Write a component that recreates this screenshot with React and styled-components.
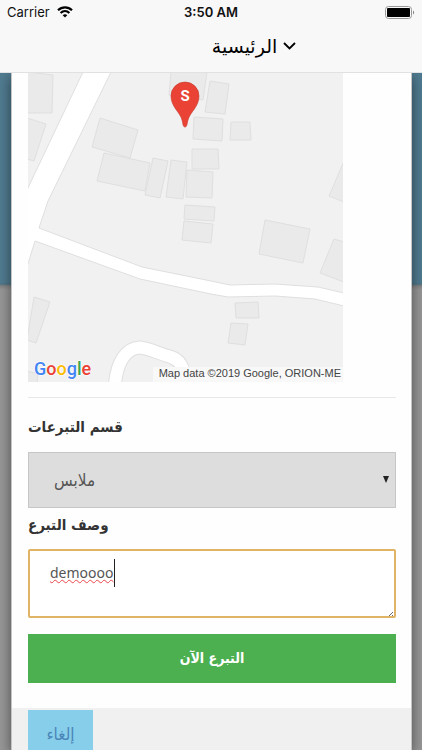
import React from 'react';
import styled, { createGlobalStyle } from 'styled-components';

const GlobalStyle = createGlobalStyle`
  * {
    box-sizing: border-box;
  }

  body {
    margin: 0;
    font-family: "DejaVu Sans Condensed", "DejaVu Sans", sans-serif;
    color: #333;
  }

  button,
  select {
    font-family: inherit;
  }
`;

const Screen = styled.div`
  display: flex;
  flex-direction: column;
  height: 100vh;
  overflow: hidden;
`;

const TopBar = styled.header`
  position: relative;
  z-index: 1;
  flex: none;
  background-color: #f8f8f8;
  border-bottom: 1px solid #dfe1e3;
`;

const StatusBar = styled.div`
  display: grid;
  grid-template-columns: 1fr auto 1fr;
  align-items: center;
  height: 24px;
  padding: 0 7px;
  font-family: Inter, sans-serif;
  font-size: 13px;
  color: #111;
`;

const Carrier = styled.div`
  display: flex;
  align-items: center;
  gap: 7px;
`;

const Time = styled.div`
  font-weight: 600;
`;

const Battery = styled.svg`
  justify-self: end;
`;

const MenuRow = styled.div`
  display: flex;
  padding-left: 86px;
`;

const MenuButton = styled.button`
  display: flex;
  align-items: center;
  gap: 6px;
  height: 48px;
  margin: 0 auto;
  padding: 0 0 4px;
  border: 0;
  background: none;
  font-family: "DejaVu Sans", sans-serif;
  font-size: 19px;
  color: #000;
`;

const Backdrop = styled.main`
  flex: 1;
  display: flex;
  min-height: 0;
  background: linear-gradient(#507b90 210px, #4c7486 211px, #858585 213px, #979797 217px);
`;

const Sheet = styled.section`
  flex: 1;
  display: flex;
  flex-direction: column;
  min-width: 0;
  margin: 0 10px 0 11px;
  border: 1px solid #c4c4c4;
  border-width: 0 1px;
  background-color: #fefefe;
  box-shadow: 0 4px 12px rgba(0, 0, 0, 0.5);
`;

const Form = styled.form`
  display: flex;
  flex-direction: column;
  padding: 0 15px 25px 16px;
`;

const Map = styled.svg`
  display: block;
  width: 315px;
  max-width: 100%;
`;

const Divider = styled.hr`
  width: 100%;
  margin: 15px 0 17px;
  border: 0;
  border-top: 1px solid #e8e8e8;
`;

const Label = styled.label`
  height: 24px;
  font-size: 15px;
  font-weight: bold;
  line-height: 24px;
`;

const SelectBox = styled.div`
  position: relative;
  margin: 13px 0 5px;
`;

const Select = styled.select`
  display: block;
  appearance: none;
  width: 100%;
  height: 56px;
  padding: 0 25px;
  border: 1px solid #c6c6c6;
  border-radius: 0;
  background-color: #ddd;
  font-size: 17px;
  color: #555;
`;

const Arrow = styled.svg`
  position: absolute;
  top: 24px;
  right: 7px;
  pointer-events: none;
`;

const TextBox = styled.div`
  position: relative;
  margin: 12px 0 16px;
`;

const TextArea = styled.textarea`
  display: block;
  width: 100%;
  height: 69px;
  padding: 12px 20px;
  border: 2px solid #e0b465;
  border-radius: 2px;
  outline: 0;
  background-color: #fff;
  resize: none;
  font-family: "Noto Sans", sans-serif;
  font-size: 14px;
  line-height: 20px;
  color: #555;
  text-decoration: underline wavy #e8474c 1px;
  caret-color: transparent;
`;

const Caret = styled.span`
  position: absolute;
  top: 10px;
  left: 86px;
  width: 1px;
  height: 28px;
  background-color: #222;
`;

const Grip = styled.svg`
  position: absolute;
  right: 3px;
  bottom: 2px;
`;

const Submit = styled.button`
  height: 49px;
  padding: 0 0 2px;
  border: 0;
  background-color: #4caf50;
  font-size: 14px;
  font-weight: bold;
  color: #fff;
`;

const Footer = styled.footer`
  flex: 1;
  padding: 2px 16px;
  background-color: #f0f0f0;
`;

const Cancel = styled.button`
  width: 65px;
  height: 48px;
  padding: 0;
  border: 0;
  background-color: #87ceeb;
  font-size: 17px;
  color: #4a86b8;
`;

const buildings = [
  '27,72 53,75 52,113 27,113',
  '27,118 46,124 34,161 27,159',
  '100,118 138,130 130,158 92,147',
  '104,153 150,163 145,191 97,181',
  '153,158 168,161 160,198 145,195',
  '171,160 187,162 183,199 166,197',
  '187,170 213,172 212,198 186,197',
  '192,149 218,149 219,169 192,169',
  '194,117 223,119 222,141 193,139',
  '231,122 250,122 251,140 230,140',
  '210,81 229,84 225,114 205,112',
  '171,72 207,72 203,100 169,95',
  '185,205 215,207 214,221 184,219',
  '184,221 213,224 211,243 182,240',
  '265,220 310,229 303,263 259,254',
  '344,161 329,196 344,202',
  '334,239 344,242 344,282 320,273',
  '235,303 258,302 259,318 236,318',
  '231,323 248,324 245,345 228,343',
  '34,297 50,302 36,343 27,340',
  '27,371 38,374 37,383 27,383'
];

const road = '83,72 27,190 27,267 35,241 140,279 211,294 228,297 275,296 315,299 344,306 344,293 318,287 275,284 230,285 211,281 142,267 39,228 48,201 111,72';
const loop = 'M115 384C117 362 126 348 140 347.500C151 349 157 353 171 357C180 360 184 366 186 384';

const logo = [
  ['G', '#4285f4'],
  ['o', '#ea4335'],
  ['o', '#fbbc05'],
  ['g', '#4285f4'],
  ['l', '#34a853'],
  ['e', '#ea4335']
];

function DonationMap() {
  return (
    <Map viewBox="28 73 315 309" role="img" aria-label="Map">
      <rect x="28" y="73" width="315" height="309" fill="#f1f1f1" />
      <g fill="#eaeaea" stroke="#dfdfdf">
        {buildings.map(points => (
          <polygon key={points} points={points} />
        ))}
      </g>
      <polygon points={road} fill="#fff" stroke="#dfdfdf" />
      <path d={loop} fill="none" stroke="#dfdfdf" strokeWidth="14" />
      <path d={loop} fill="none" stroke="#fff" strokeWidth="12" />
      <rect x="153" y="367" width="190" height="15" fill="#f8f8f8" />
      <path d="M185 127C183 127 183 124 182 120C180 112 171 107 171 96A14 14 0 0 1 199 96C199 107 190 112 188 120C187 124 187 127 185 127Z" fill="#ea4335" stroke="#c5392d" strokeWidth="0.600" />
      <text x="185" y="101" textAnchor="middle" fill="#fff" fontFamily="Roboto, sans-serif" fontSize="15" fontWeight="700">S</text>
      <text x="34" y="375" fontFamily="Roboto, sans-serif" fontSize="18" fontWeight="500" stroke="#fff" strokeWidth="1" paintOrder="stroke">
        {logo.map(([letter, color], i) => (
          <tspan key={i} fill={color}>{letter}</tspan>
        ))}
      </text>
      <text x="341" y="377" textAnchor="end" fill="#444" fontFamily="Liberation Sans, sans-serif" fontSize="11">
        Map data ©2019 Google, ORION-ME
      </text>
    </Map>
  );
}

class App extends React.Component {
  render() {
    return (
      <Screen>
        <GlobalStyle />
        <TopBar>
          <StatusBar>
            <Carrier>
              Carrier
              <svg width="16" height="12" viewBox="0 0 16 12" fill="none" stroke="#000" strokeWidth="2.200">
                <path d="M1 4.200C5 0.300 11 0.300 15 4.200" />
                <path d="M3.600 7C6.200 4.600 9.800 4.600 12.400 7" />
                <path d="M8 11.600L5.700 9.200C7 8 9 8 10.300 9.200Z" fill="#000" stroke="none" />
              </svg>
            </Carrier>
            <Time>3:50 AM</Time>
            <Battery width="30" height="13" viewBox="0 0 30 13">
              <rect x="0.500" y="0.500" width="26" height="12" rx="3" fill="#f8f8f8" stroke="#999" />
              <rect x="2" y="2" width="23" height="9" rx="1" fill="#000" />
              <path d="M28 4.500C29.500 5 29.500 8 28 8.500Z" fill="#888" />
            </Battery>
          </StatusBar>
          <MenuRow>
            <MenuButton type="button">
              <span dir="rtl">الرئيسية</span>
              <svg width="13" height="8" viewBox="0 0 13 8" fill="none" stroke="#000" strokeWidth="1.800">
                <path d="M1 1L6.500 6.500L12 1" />
              </svg>
            </MenuButton>
          </MenuRow>
        </TopBar>

        <Backdrop>
          <Sheet>
            <Form onSubmit={e => e.preventDefault()}>
              <DonationMap />
              <Divider />
              <Label htmlFor="category">قسم التبرعات</Label>
              <SelectBox>
                <Select id="category">
                  <option>ملابس</option>
                </Select>
                <Arrow width="6" height="7" viewBox="0 0 6 7">
                  <path d="M0 0H6L3 7Z" fill="#222" />
                </Arrow>
              </SelectBox>
              <Label htmlFor="description">وصف التبرع</Label>
              <TextBox>
                <TextArea id="description" defaultValue="demoooo" spellCheck={false} />
                <Caret />
                <Grip width="4" height="4" viewBox="0 0 4 4" stroke="#666">
                  <path d="M0 4L4 0M3 4L4 3" />
                </Grip>
              </TextBox>
              <Submit type="submit">التبرع الآن</Submit>
            </Form>
            <Footer>
              <Cancel type="button">إلغاء</Cancel>
            </Footer>
          </Sheet>
        </Backdrop>
      </Screen>
    );
  }
}

export default App;
